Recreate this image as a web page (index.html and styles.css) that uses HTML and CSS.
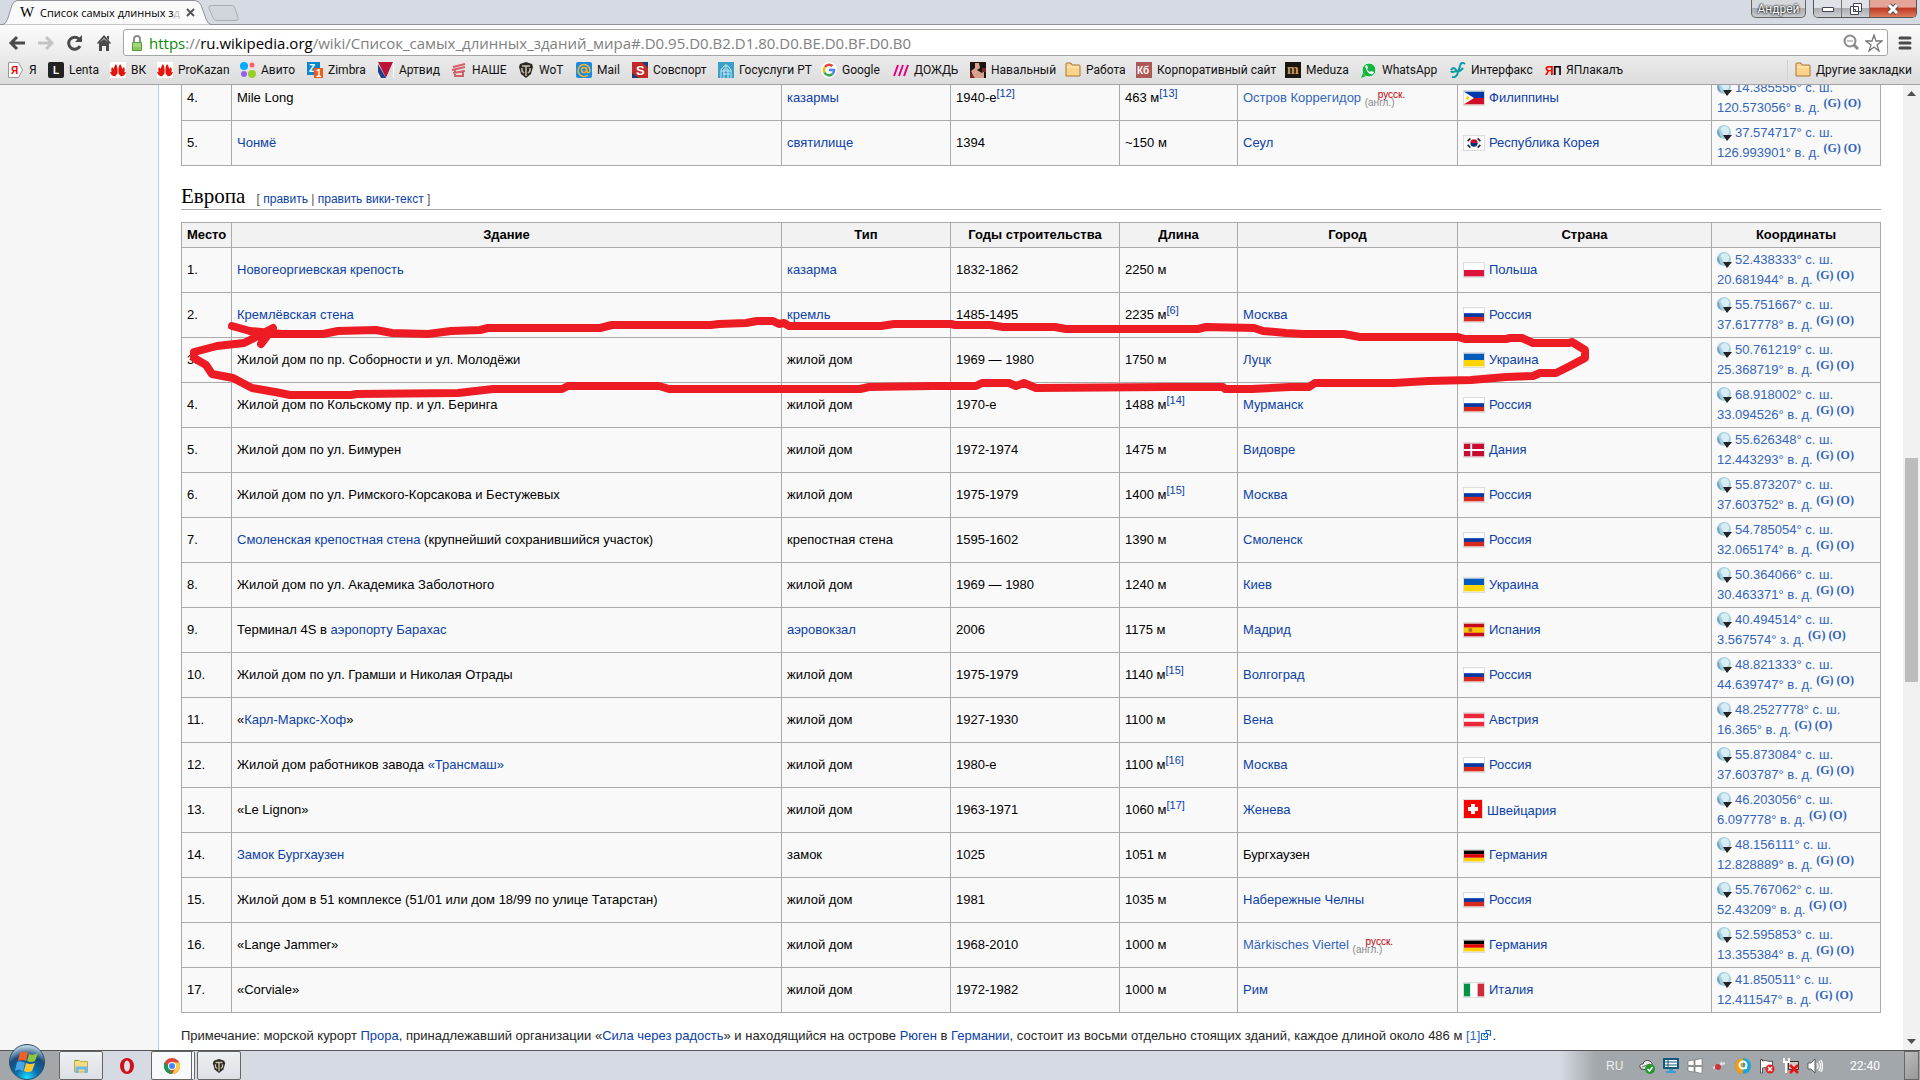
FILE: index.html
```html
<!DOCTYPE html>
<html lang="ru">
<head>
    <meta charset="UTF-8">
    <title>Список самых длинных зданий мира</title>
    <link rel="stylesheet" href="styles.css">
</head>
<body>

    <!-- флаги и значки -->
    <svg class="sprite" aria-hidden="true">
        <symbol id="ph" viewBox="0 0 22 14"><path fill="#0038a8" d="M0 0h22v7H0z"/><path fill="#ce1126" d="M0 7h22v7H0z"/><path fill="#fff" d="M0 0l11 7-11 7z"/><circle cx="4" cy="7" r="2" fill="#fcd116"/></symbol>
        <symbol id="kr" viewBox="0 0 22 14"><path fill="#fff" d="M0 0h22v14H0z"/><path fill="#c60c30" d="M7 7a4 4 0 0 1 8 0z"/><path fill="#003478" d="M7 7a4 4 0 0 0 8 0z"/><path stroke="#333" stroke-width="2" d="M4 5l3-3M15 2l3 3M4 9l3 3M15 12l3-3"/></symbol>
        <symbol id="pl" viewBox="0 0 22 14"><path fill="#fff" d="M0 0h22v7H0z"/><path fill="#dc143c" d="M0 7h22v7H0z"/></symbol>
        <symbol id="ru" viewBox="0 0 22 14"><path fill="#fff" d="M0 0h22v5H0z"/><path fill="#0039a6" d="M0 5h22v5H0z"/><path fill="#d52b1e" d="M0 9h22v5H0z"/></symbol>
        <symbol id="ua" viewBox="0 0 22 14"><path fill="#005bbb" d="M0 0h22v7H0z"/><path fill="#ffd500" d="M0 7h22v7H0z"/></symbol>
        <symbol id="dk" viewBox="0 0 22 14"><path fill="#c60c30" d="M0 0h22v14H0z"/><path fill="#fff" d="M7 0h2v14H7zM0 6h22v2H0z"/></symbol>
        <symbol id="es" viewBox="0 0 22 14"><path fill="#c60b1e" d="M0 0h22v14H0z"/><path fill="#ffc400" d="M0 4h22v6H0z"/><path fill="#ad6b24" d="M5 5h4v4H5z"/></symbol>
        <symbol id="at" viewBox="0 0 22 14"><path fill="#ed2939" d="M0 0h22v14H0z"/><path fill="#fff" d="M0 5h22v4H0z"/></symbol>
        <symbol id="ch" viewBox="0 0 18 18"><path fill="#f00" d="M0 0h18v18H0z"/><path fill="#fff" d="M7 4h4v3h3v4h-3v3H7v-3H4V7h3z"/></symbol>
        <symbol id="de" viewBox="0 0 22 12"><path d="M0 0h22v4H0z"/><path fill="#d00" d="M0 4h22v4H0z"/><path fill="#ffce00" d="M0 8h22v4H0z"/></symbol>
        <symbol id="it" viewBox="0 0 22 14"><path fill="#009246" d="M0 0h7v14H0z"/><path fill="#fff" d="M7 0h8v14H7z"/><path fill="#ce2b37" d="M15 0h7v14h-7z"/></symbol>
        <symbol id="globe" viewBox="0 0 15 16"><circle cx="7" cy="7" r="7" fill="#a9cfe0"/><path fill="#d6edf4" d="M5 2c4-2 8 1 7 5s-5 5-6 2-4-4-1-7z"/><path fill="#6fa3c4" d="M1 4c2 3 1 6 4 9-4-1-6-5-4-9z"/><path fill="#222" d="M6 10h9l-5 6z"/></symbol>
        <symbol id="flame" viewBox="0 0 16 16"><path fill="#fff" d="M0 0h16v16H0z"/><path fill="#e3150d" d="M7 13C3 11 3 5 6 2c2 3 2 8 1 11zM9 13c4-2 4-8 1-11-2 3-2 8-1 11zM6 13C2 12 0 9 2 5c2 2 4 4 4 8zM10 13c4-1 6-4 4-8-2 2-4 4-4 8zM6 14c-3 1-5-1-6-4 3 0 5 1 6 4zM10 14c3 1 5-1 6-4-3 0-5 1-6 4z"/></symbol>
        <symbol id="folder" viewBox="0 0 16 16"><path fill="#fbd38b" stroke="#a87434" d="M1 14V2q0-1 1-1h4l1 2h7q1 0 1 1v10z"/><path stroke="#fff0c8" d="M2 5h12"/></symbol>
        <symbol id="tank" viewBox="0 0 16 16"><path fill="#2c2a25" d="M2 2l6-2 6 2 1 3-2 7-5 4-5-4-2-7z"/><path fill="none" stroke="#c9c1a8" stroke-width="1.500" d="M4 4h8M8 4v10M4 6v3l2 2M12 6v3l-2 2"/></symbol>
    </svg>

    <header class="browser">
        <div class="tabstrip">
            <svg class="tab-shape" width="240" height="25" viewBox="0 0 240 25" aria-hidden="true">
                <path fill="#fafafa" stroke="#8f9398" d="M-1 24.500H3Q6 24 8 18L12 5Q14 1 17 .5H195Q199 1 201 5L206 19Q208 24 211 24.500"/>
                <path fill="#d0d6dc" stroke="#a9aeb4" d="M211 5.500h21q2 0 3 3l3 9q1 3-2 3h-19q-3 0-4-3l-4-9q-1-3 2-3z"/>
            </svg>
            <div class="tab">
                <span class="wiki">W</span>
                <span class="tab-title">Список самых длинных з<i>д</i></span>
                <button class="tab-close" aria-label="Закрыть вкладку"><svg width="9" height="9" viewBox="0 0 9 9"><path stroke="#555" stroke-width="2" d="M1 1l7 7M8 1L1 8"/></svg></button>
            </div>
            <div class="window-buttons">
                <button class="user">Андрей</button>
                <div class="win-group">
                    <button class="win" aria-label="Свернуть"><svg width="14" height="8" viewBox="0 0 14 8"><path fill="#fff" stroke="#445" d="M1.500 2.500h11v4h-11z"/></svg></button>
                    <button class="win" aria-label="Окно"><svg width="12" height="12" viewBox="0 0 12 12"><path fill="#fff" stroke="#445" d="M3.500.5h8v8h-8zM.5 3.500h8v8h-8zM3.500 6.500h2v2h-2z"/></svg></button>
                    <button class="win close" aria-label="Закрыть"><svg width="14" height="12" viewBox="0 0 14 12"><path stroke="#555" stroke-width="5" d="M3 2l8 8M11 2l-8 8"/><path stroke="#fff" stroke-width="3" d="M3 2l8 8M11 2l-8 8"/></svg></button>
                </div>
            </div>
        </div>

        <div class="toolbar">
            <button class="nav" aria-label="Назад"><svg width="18" height="16" viewBox="0 0 18 16"><path fill="none" stroke="#4a4a4a" stroke-width="3" d="M17 8H3M9 2L3 8l6 6"/></svg></button>
            <button class="nav" aria-label="Вперёд"><svg width="18" height="16" viewBox="0 0 18 16"><path fill="none" stroke="#c4c4c4" stroke-width="3" d="M1 8h14M9 2l6 6-6 6"/></svg></button>
            <button class="nav" aria-label="Обновить"><svg width="16" height="16" viewBox="0 0 16 16"><path fill="none" stroke="#4a4a4a" stroke-width="3" d="M13 11a6 6 0 1 1-1-7"/><path fill="#4a4a4a" d="M15 0v7H8z"/></svg></button>
            <button class="nav" aria-label="Домой"><svg width="16" height="16" viewBox="0 0 16 16"><path fill="#4a4a4a" d="M8 0l7 8-1 1-6-6-6 6-1-1zM3 8l5-4 5 4v8h-3v-5H6v5H3zM11 1h2v4l-2-2z"/></svg></button>
            <div class="omnibox">
                <svg width="12" height="16" viewBox="0 0 12 16"><path fill="none" stroke="#8a8f8a" stroke-width="2" d="M3 8V4a3 3 0 0 1 6 0v4"/><path fill="#8cc860" stroke="#5b9a3c" d="M1.500 7.500h9v8h-9z"/><path stroke="#b9e39a" d="M2 9h8M2 11h8"/></svg>
                <div class="url"><b>https</b>://<strong>ru.wikipedia.org</strong>/wiki/Список_самых_длинных_зданий_мира#.D0.95.D0.B2.D1.80.D0.BE.D0.BF.D0.B0</div>
                <svg width="16" height="17" viewBox="0 0 16 17"><circle cx="7" cy="7" r="5.500" fill="none" stroke="#888" stroke-width="2"/><path stroke="#888" stroke-width="3" d="M11 11l4 4"/><path stroke="#888" d="M4 7h6"/></svg>
                <svg width="18" height="18" viewBox="0 0 18 18"><path fill="#fff" stroke="#777" stroke-width="1.300" d="M9 1l2 6h6l-5 4 2 6-5-4-5 4 2-6-5-4h6z"/></svg>
            </div>
            <button class="menu" aria-label="Меню"><svg width="14" height="14" viewBox="0 0 14 14"><path stroke="#4a4a4a" stroke-width="3" stroke-linecap="round" d="M2 2h10M2 7h10M2 12h10"/></svg></button>
        </div>

        <nav class="bookmarks">
            <a href="#"><svg viewBox="0 0 16 16"><path fill="#fff" stroke="#999" d="M.5.500h10l4 7.500-4 7.500H.5z"/><text x="3" y="12" class="i-red">Я</text></svg>Я</a>
            <a href="#"><svg viewBox="0 0 16 16"><rect width="16" height="16" rx="2" fill="#222"/><text x="5" y="12" class="i-white">L</text></svg>Lenta</a>
            <a href="#"><svg viewBox="0 0 16 16"><use href="#flame"/></svg>ВК</a>
            <a href="#"><svg viewBox="0 0 16 16"><use href="#flame"/></svg>ProKazan</a>
            <a href="#"><svg viewBox="0 0 16 16"><circle cx="4" cy="4" r="4" fill="#0af"/><circle cx="12" cy="3" r="2.500" fill="#ff6163"/><circle cx="4" cy="12" r="3" fill="#965eeb"/><circle cx="12" cy="12" r="4" fill="#97cf26"/></svg>Авито</a>
            <a href="#"><svg viewBox="0 0 16 16"><path fill="#0d87c9" d="M0 0h13v13H0z"/><text x="2" y="10" class="i-white">Z</text><path fill="#f05a1a" d="M7 6h9v10H7z"/><text x="9" y="15" class="i-white">1</text></svg>Zimbra</a>
            <a href="#"><svg viewBox="0 0 16 16"><path fill="#fff" d="M0 0h16v16H0z"/><path fill="#bd1338" d="M0 0h15L8 16z"/><path fill="#1d3d8f" d="M0 2l8 14H3L0 10z"/><path fill="#ddd" d="M15 2v14H8z"/></svg>Артвид</a>
            <a href="#"><svg viewBox="0 0 16 16"><path fill="none" stroke="#d2616b" stroke-width="2" d="M2 5l12-3M1 8l13-3M2 11l12-2M4 8v6h8V8M5 14h6"/></svg>НАШЕ</a>
            <a href="#"><svg viewBox="0 0 16 16"><use href="#tank"/></svg>WoT</a>
            <a href="#"><svg viewBox="0 0 16 16"><rect width="16" height="16" rx="2" fill="#168de2"/><circle cx="8" cy="8" r="2.500" fill="none" stroke="#f9b12b" stroke-width="1.500"/><path fill="none" stroke="#f9b12b" stroke-width="1.500" d="M12 13a6 6 0 1 1 2-5q0 3-2 2.500-1.500 0-1.500-5"/></svg>Mail</a>
            <a href="#"><svg viewBox="0 0 16 16"><path fill="#c22a2a" d="M0 0h16v16H0z"/><path fill="#1f3b75" d="M10 0h6v6zM0 16v-5l7 5z"/><text x="4" y="13" class="i-white i-big">S</text></svg>Совспорт</a>
            <a href="#"><svg viewBox="0 0 16 16"><path fill="#3b9fc6" d="M0 0h16v16H0z"/><path fill="none" stroke="#c6eaf5" d="M3 16V8l3-4h4l3 4v8M6 16V7h4v9M8 2v4M3 9h10M5 12h7"/></svg>Госуслуги РТ</a>
            <a href="#"><svg viewBox="0 0 16 16"><circle cx="8" cy="8" r="8" fill="#fff"/><g fill="none" stroke-width="2.500"><path stroke="#ea4335" d="M4 5a5 5 0 0 1 7.500-1"/><path stroke="#fbbc05" d="M3.500 10.500a5 5 0 0 1 .5-5.500"/><path stroke="#34a853" d="M3.500 10.500a5 5 0 0 0 8 1.500"/><path stroke="#4285f4" d="M11.500 12Q13 11 13 8H8"/></g></svg>Google</a>
            <a href="#"><svg viewBox="0 0 16 16"><path stroke="#e6007e" stroke-width="2" d="M1 14L5 3M6 14l4-11M11 14l4-11"/></svg>ДОЖДЬ</a>
            <a href="#"><svg viewBox="0 0 16 16"><path fill="#1c1514" d="M0 0h16v16H0z"/><path fill="#d9a08c" d="M5 1h4l1 5-3 2 5 3 2-2v7H4L1 9l4-3z"/><path fill="#7c2722" d="M0 10l5 6H0zM12 6h4v4h-4z"/></svg>Навальный</a>
            <a href="#"><svg viewBox="0 0 16 16"><use href="#folder"/></svg>Работа</a>
            <a href="#"><svg viewBox="0 0 16 16"><path fill="#ad5757" d="M0 0h16v16H0z"/><text x="1" y="12" class="i-white">Кб</text></svg>Корпоративный сайт</a>
            <a href="#"><svg viewBox="0 0 16 16"><path fill="#1b1612" d="M0 0h16v16H0z"/><text x="2" y="12" class="i-gold">m</text></svg>Meduza</a>
            <a href="#"><svg viewBox="0 0 16 16"><circle cx="8" cy="8" r="7" fill="#14b53c" stroke="#fff"/><path fill="#14b53c" d="M0 16l2-5 3 3z"/><path fill="#fff" d="M4 4l2-1 1 3-1 1q1 2 3 3l1-1 3 1-1 2Q7 14 4 4z"/></svg>WhatsApp</a>
            <a href="#"><svg viewBox="0 0 16 16"><path fill="none" stroke="#109aa4" stroke-width="2" d="M15 2q-4-3-5 2L7 13q-2 3-5 2M1 8q3-4 5 0t7-2M6 9q-4 2-5 0"/></svg>Интерфакс</a>
            <a href="#"><svg viewBox="0 0 16 16"><text x="0" y="13" class="i-red i-heavy">Я</text><text x="8" y="13" class="i-black i-heavy">П</text></svg>ЯПлакалъ</a>
            <a href="#" class="other"><svg viewBox="0 0 16 16"><use href="#folder"/></svg>Другие закладки</a>
        </nav>
    </header>

    <div class="viewport">
        <main class="content">
            <table class="wikitable asia">
                <colgroup><col class="c-num"><col><col class="c-type"><col class="c-years"><col class="c-len"><col class="c-city"><col class="c-land"><col class="c-geo"></colgroup>
                <tr><td>4.</td><td>Mile Long</td><td><a href="#">казармы</a></td><td>1940-е<sup><a href="#">[12]</a></sup></td><td>463 м<sup><a href="#">[13]</a></sup></td><td><a href="#" class="ext">Остров Коррегидор</a> <span class="lang"><a href="#">русск.</a><span>(англ.)</span></span></td><td><svg class="flag"><use href="#ph"/></svg><a href="#">Филиппины</a></td><td class="geo"><svg><use href="#globe"/></svg><a href="#">14.385556° с. ш.<br>120.573056° в. д.</a> <sup><a href="#">(G)</a> <a href="#">(O)</a></sup></td></tr>
                <tr><td>5.</td><td><a href="#">Чонмё</a></td><td><a href="#">святилище</a></td><td>1394</td><td>~150 м</td><td><a href="#">Сеул</a></td><td><svg class="flag"><use href="#kr"/></svg><a href="#">Республика Корея</a></td><td class="geo"><svg><use href="#globe"/></svg><a href="#">37.574717° с. ш.<br>126.993901° в. д.</a> <sup><a href="#">(G)</a> <a href="#">(O)</a></sup></td></tr>
            </table>

            <h3>Европа <span class="edit">[ <a href="#">править</a> | <a href="#">править вики-текст</a> ]</span></h3>

            <table class="wikitable">
                <colgroup><col class="c-num"><col><col class="c-type"><col class="c-years"><col class="c-len"><col class="c-city"><col class="c-land"><col class="c-geo"></colgroup>
                <tr><th>Место</th><th>Здание</th><th>Тип</th><th>Годы строительства</th><th>Длина</th><th>Город</th><th>Страна</th><th>Координаты</th></tr>
                <tr><td>1.</td><td><a href="#">Новогеоргиевская крепость</a></td><td><a href="#">казарма</a></td><td>1832-1862</td><td>2250 м</td><td></td><td><svg class="flag"><use href="#pl"/></svg><a href="#">Польша</a></td><td class="geo"><svg><use href="#globe"/></svg><a href="#">52.438333° с. ш.<br>20.681944° в. д.</a> <sup><a href="#">(G)</a> <a href="#">(O)</a></sup></td></tr>
                <tr><td>2.</td><td><a href="#">Кремлёвская стена</a></td><td><a href="#">кремль</a></td><td>1485-1495</td><td>2235 м<sup><a href="#">[6]</a></sup></td><td><a href="#">Москва</a></td><td><svg class="flag"><use href="#ru"/></svg><a href="#">Россия</a></td><td class="geo"><svg><use href="#globe"/></svg><a href="#">55.751667° с. ш.<br>37.617778° в. д.</a> <sup><a href="#">(G)</a> <a href="#">(O)</a></sup></td></tr>
                <tr><td>3.</td><td>Жилой дом по пр. Соборности и ул. Молодёжи</td><td>жилой дом</td><td>1969 — 1980</td><td>1750 м</td><td><a href="#">Луцк</a></td><td><svg class="flag"><use href="#ua"/></svg><a href="#">Украина</a></td><td class="geo"><svg><use href="#globe"/></svg><a href="#">50.761219° с. ш.<br>25.368719° в. д.</a> <sup><a href="#">(G)</a> <a href="#">(O)</a></sup></td></tr>
                <tr><td>4.</td><td>Жилой дом по Кольскому пр. и ул. Беринга</td><td>жилой дом</td><td>1970-е</td><td>1488 м<sup><a href="#">[14]</a></sup></td><td><a href="#">Мурманск</a></td><td><svg class="flag"><use href="#ru"/></svg><a href="#">Россия</a></td><td class="geo"><svg><use href="#globe"/></svg><a href="#">68.918002° с. ш.<br>33.094526° в. д.</a> <sup><a href="#">(G)</a> <a href="#">(O)</a></sup></td></tr>
                <tr><td>5.</td><td>Жилой дом по ул. Бимурен</td><td>жилой дом</td><td>1972-1974</td><td>1475 м</td><td><a href="#">Видовре</a></td><td><svg class="flag"><use href="#dk"/></svg><a href="#">Дания</a></td><td class="geo"><svg><use href="#globe"/></svg><a href="#">55.626348° с. ш.<br>12.443293° в. д.</a> <sup><a href="#">(G)</a> <a href="#">(O)</a></sup></td></tr>
                <tr><td>6.</td><td>Жилой дом по ул. Римского-Корсакова и Бестужевых</td><td>жилой дом</td><td>1975-1979</td><td>1400 м<sup><a href="#">[15]</a></sup></td><td><a href="#">Москва</a></td><td><svg class="flag"><use href="#ru"/></svg><a href="#">Россия</a></td><td class="geo"><svg><use href="#globe"/></svg><a href="#">55.873207° с. ш.<br>37.603752° в. д.</a> <sup><a href="#">(G)</a> <a href="#">(O)</a></sup></td></tr>
                <tr><td>7.</td><td><a href="#">Смоленская крепостная стена</a> (крупнейший сохранившийся участок)</td><td>крепостная стена</td><td>1595-1602</td><td>1390 м</td><td><a href="#">Смоленск</a></td><td><svg class="flag"><use href="#ru"/></svg><a href="#">Россия</a></td><td class="geo"><svg><use href="#globe"/></svg><a href="#">54.785054° с. ш.<br>32.065174° в. д.</a> <sup><a href="#">(G)</a> <a href="#">(O)</a></sup></td></tr>
                <tr><td>8.</td><td>Жилой дом по ул. Академика Заболотного</td><td>жилой дом</td><td>1969 — 1980</td><td>1240 м</td><td><a href="#">Киев</a></td><td><svg class="flag"><use href="#ua"/></svg><a href="#">Украина</a></td><td class="geo"><svg><use href="#globe"/></svg><a href="#">50.364066° с. ш.<br>30.463371° в. д.</a> <sup><a href="#">(G)</a> <a href="#">(O)</a></sup></td></tr>
                <tr><td>9.</td><td>Терминал 4S в <a href="#">аэропорту Барахас</a></td><td><a href="#">аэровокзал</a></td><td>2006</td><td>1175 м</td><td><a href="#">Мадрид</a></td><td><svg class="flag"><use href="#es"/></svg><a href="#">Испания</a></td><td class="geo"><svg><use href="#globe"/></svg><a href="#">40.494514° с. ш.<br>3.567574° з. д.</a> <sup><a href="#">(G)</a> <a href="#">(O)</a></sup></td></tr>
                <tr><td>10.</td><td>Жилой дом по ул. Грамши и Николая Отрады</td><td>жилой дом</td><td>1975-1979</td><td>1140 м<sup><a href="#">[15]</a></sup></td><td><a href="#">Волгоград</a></td><td><svg class="flag"><use href="#ru"/></svg><a href="#">Россия</a></td><td class="geo"><svg><use href="#globe"/></svg><a href="#">48.821333° с. ш.<br>44.639747° в. д.</a> <sup><a href="#">(G)</a> <a href="#">(O)</a></sup></td></tr>
                <tr><td>11.</td><td>«<a href="#">Карл-Маркс-Хоф</a>»</td><td>жилой дом</td><td>1927-1930</td><td>1100 м</td><td><a href="#">Вена</a></td><td><svg class="flag"><use href="#at"/></svg><a href="#">Австрия</a></td><td class="geo"><svg><use href="#globe"/></svg><a href="#">48.2527778° с. ш.<br>16.365° в. д.</a> <sup><a href="#">(G)</a> <a href="#">(O)</a></sup></td></tr>
                <tr><td>12.</td><td>Жилой дом работников завода <a href="#">«Трансмаш»</a></td><td>жилой дом</td><td>1980-е</td><td>1100 м<sup><a href="#">[16]</a></sup></td><td><a href="#">Москва</a></td><td><svg class="flag"><use href="#ru"/></svg><a href="#">Россия</a></td><td class="geo"><svg><use href="#globe"/></svg><a href="#">55.873084° с. ш.<br>37.603787° в. д.</a> <sup><a href="#">(G)</a> <a href="#">(O)</a></sup></td></tr>
                <tr><td>13.</td><td>«Le Lignon»</td><td>жилой дом</td><td>1963-1971</td><td>1060 м<sup><a href="#">[17]</a></sup></td><td><a href="#">Женева</a></td><td><svg class="flag square"><use href="#ch"/></svg><a href="#">Швейцария</a></td><td class="geo"><svg><use href="#globe"/></svg><a href="#">46.203056° с. ш.<br>6.097778° в. д.</a> <sup><a href="#">(G)</a> <a href="#">(O)</a></sup></td></tr>
                <tr><td>14.</td><td><a href="#">Замок Бургхаузен</a></td><td>замок</td><td>1025</td><td>1051 м</td><td>Бургхаузен</td><td><svg class="flag low"><use href="#de"/></svg><a href="#">Германия</a></td><td class="geo"><svg><use href="#globe"/></svg><a href="#">48.156111° с. ш.<br>12.828889° в. д.</a> <sup><a href="#">(G)</a> <a href="#">(O)</a></sup></td></tr>
                <tr><td>15.</td><td>Жилой дом в 51 комплексе (51/01 или дом 18/99 по улице Татарстан)</td><td>жилой дом</td><td>1981</td><td>1035 м</td><td><a href="#">Набережные Челны</a></td><td><svg class="flag"><use href="#ru"/></svg><a href="#">Россия</a></td><td class="geo"><svg><use href="#globe"/></svg><a href="#">55.767062° с. ш.<br>52.43209° в. д.</a> <sup><a href="#">(G)</a> <a href="#">(O)</a></sup></td></tr>
                <tr><td>16.</td><td>«Lange Jammer»</td><td>жилой дом</td><td>1968-2010</td><td>1000 м</td><td><a href="#" class="ext">Märkisches Viertel</a> <span class="lang"><a href="#">русск.</a><span>(англ.)</span></span></td><td><svg class="flag low"><use href="#de"/></svg><a href="#">Германия</a></td><td class="geo"><svg><use href="#globe"/></svg><a href="#">52.595853° с. ш.<br>13.355384° в. д.</a> <sup><a href="#">(G)</a> <a href="#">(O)</a></sup></td></tr>
                <tr><td>17.</td><td>«Corviale»</td><td>жилой дом</td><td>1972-1982</td><td>1000 м</td><td><a href="#">Рим</a></td><td><svg class="flag"><use href="#it"/></svg><a href="#">Италия</a></td><td class="geo"><svg><use href="#globe"/></svg><a href="#">41.850511° с. ш.<br>12.411547° в. д.</a> <sup><a href="#">(G)</a> <a href="#">(O)</a></sup></td></tr>
            </table>

            <p class="note">Примечание: морской курорт <a href="#">Прора</a>, принадлежавший организации «<a href="#">Сила через радость</a>» и находящийся на острове <a href="#">Рюген</a> в <a href="#">Германии</a>, состоит из восьми отдельно стоящих зданий, каждое длиной около 486 м <a href="#" class="ext">[1]<svg width="12" height="10" viewBox="0 0 12 10"><path fill="#fff" stroke="#06c" d="M1.500 3.500h6v6h-6zM5.500.500h5v5l-2-1-3 3-2-2 3-3z"/></svg></a>.</p>
        </main>

        <div class="scrollbar">
            <svg width="9" height="5" viewBox="0 0 9 5"><path fill="#505050" d="M0 5l4.500-5L9 5z"/></svg>
            <div class="thumb"></div>
            <svg width="9" height="5" viewBox="0 0 9 5"><path fill="#505050" d="M0 0l4.500 5L9 0z"/></svg>
        </div>

        <!-- обводка от руки -->
        <svg class="marker" width="1410" height="90" viewBox="185 315 1410 90" aria-hidden="true">
            <path d="M232 326L250 331L282 334H323L338 331L376 330L392 333L428 334L451 331L480 330L488 328H600L612 325H711L719 324L746 323L757 321H773L779 324L784 323L789 326H881L894 324H951L955 325H990L1003 327H1055L1066 329H1198L1206 327L1254 328L1263 331L1286 333L1303 334H1344L1360 337H1458L1465 339H1506L1510 338H1522L1533 343H1569L1572 342L1585 350V358L1570 366L1556 373H1540L1533 376L1506 377L1471 380L1428 381L1394 383H1315L1309 387H1290L1252 389H1225L1223 387H1181L1166 387L1036 388L1024 383L1016 386L1009 383H982L976 386H932L869 387L860 389H669L659 386H568L562 389H493L458 393L357 394L351 395H290L275 392L252 388L233 378L212 374L206 365L194 358V352L217 346L244 343L256 337L273 328L261 344L266 335L250 331"/>
        </svg>
    </div>

    <footer class="taskbar">
        <button class="start" aria-label="Пуск">
            <svg width="36" height="36" viewBox="0 0 36 36">
                <defs><radialGradient id="orb" cx=".5" cy=".95" r=".9"><stop offset="0" stop-color="#1fe0ff"/><stop offset=".35" stop-color="#0a6fae"/><stop offset=".7" stop-color="#1a4a78"/><stop offset="1" stop-color="#b9d0e0"/></radialGradient></defs>
                <circle cx="18" cy="18" r="17.500" fill="url(#orb)" stroke="#27506e"/>
                <path fill="#f0602a" d="M11 9q4-3 8 0l-2 8q-4-2-8 0z"/><path fill="#8cc63e" d="M20 10q4 2 9-1l-3 8q-4 2-8 0z"/><path fill="#4aa5e8" d="M8 18q4-2 8 1l-2 8q-4-3-8 0z"/><path fill="#fdc82f" d="M17 19q4 2 9 0l-3 8q-4 2-8 0z"/>
            </svg>
        </button>
        <button class="task" aria-label="Проводник"><svg width="18" height="16" viewBox="0 0 18 16"><path fill="#f3dc84" stroke="#c7a94d" d="M2.500 14V2.500h5l1 1h7V14z"/><path fill="#6a3" d="M3 2h3v1H3z"/><path fill="none" stroke="#6db8e6" stroke-width="3" d="M5 15v-5h9v5"/></svg></button>
        <button class="task flat" aria-label="Opera"><svg width="14" height="16" viewBox="0 0 14 16"><ellipse cx="7" cy="8" rx="7" ry="8" fill="#cf1018"/><ellipse cx="7" cy="8" rx="3" ry="5.500" fill="#dde1e8"/></svg></button>
        <button class="task active" aria-label="Chrome"><svg width="16" height="16" viewBox="0 0 16 16"><circle cx="8" cy="8" r="8" fill="#db4437"/><path fill="#0f9d58" d="M1 4l5 8 2 4A8 8 0 0 1 1 4z"/><path fill="#ffcd40" d="M8 4.500h7.200A8 8 0 0 1 8 16l3.500-6z"/><circle cx="8" cy="8" r="4" fill="#fff"/><circle cx="8" cy="8" r="3" fill="#4285f4"/></svg></button>
        <button class="task" aria-label="World of Tanks"><svg width="14" height="16" viewBox="0 0 16 16"><use href="#tank"/></svg></button>
        <div class="tray">
            <span class="lang-ind">RU</span>
            <div class="tray-icons">
                <svg viewBox="0 0 16 16"><path fill="#e8e8e8" stroke="#444" d="M1 9q-1-3 3-3 1-5 7-3 3 2 2 5l-3 4-8-1z"/><path stroke="#666" d="M3 9l8-3"/><circle cx="11" cy="11" r="5" fill="#219a2a"/><path fill="none" stroke="#fff" stroke-width="1.500" d="M8.500 11l2 2 3-4"/></svg>
                <svg viewBox="0 0 16 16"><path fill="#fff" stroke="#14597c" stroke-width="2" d="M1 1h14v9H1z"/><path stroke="#14597c" d="M5 2v8M2 4h12M2 7h12"/><path fill="#3a9fd0" d="M6 11h4v2h3v2H3v-2h3z"/></svg>
                <svg viewBox="0 0 16 16"><path fill="#fff" stroke="#666" stroke-width=".6" d="M1 3l6-1v5.500H1zM8 2l7-1.500v7H8zM1 8.500h6V14l-6-1zM8 8.500h7v7L8 14z"/></svg>
                <svg viewBox="0 0 16 16"><path stroke="#ddd" stroke-width="2" d="M2 10l12-5M5 12l6-8"/><circle cx="7" cy="9" r="3" fill="#c33"/></svg>
                <svg viewBox="0 0 16 16"><circle cx="8" cy="8" r="8" fill="#1ca6d8"/><path fill="#f59b13" d="M8 0a8 8 0 0 0 0 16z"/><circle cx="8" cy="7" r="3.500" fill="none" stroke="#fff" stroke-width="2"/><path stroke="#fff" stroke-width="2" d="M11 7v4"/></svg>
                <svg viewBox="0 0 16 16"><path fill="#fff" stroke="#555" d="M1.500 15V1.500h2V3q3-1 5 0t5 0v7q-3 1-5 0t-5 0v5z"/><circle cx="11" cy="11" r="4.500" fill="#d22"/><path stroke="#fff" stroke-width="1.500" d="M9 9l4 4M13 9l-4 4"/></svg>
                <svg viewBox="0 0 16 16"><path fill="#ccc" stroke="#333" d="M5.500 3.500h10v8h-10z"/><path fill="none" stroke="#fff" stroke-width="2" d="M1 0v4h5V0M3 4v11"/><path stroke="#e11" stroke-width="2.500" d="M7 7l8 8M15 7l-8 8"/></svg>
                <svg viewBox="0 0 16 16"><path fill="#fff" stroke="#444" stroke-width=".8" d="M1 5h3l4-4v14l-4-4H1z"/><path fill="none" stroke="#fff" stroke-width="1.300" d="M10 5q2 3 0 6M12 3q3 5 0 10M14 2q3 6 0 12"/></svg>
            </div>
            <time>22:40</time>
            <button class="desktop" aria-label="Свернуть все окна"></button>
        </div>
    </footer>

</body>
</html>
```

FILE: styles.css
```css
* {
    box-sizing: border-box;
}

body {
    margin: 0;
    height: 100vh;
    display: flex;
    flex-direction: column;
    overflow: hidden;
    font-family: "Liberation Sans", Arial, sans-serif;
    font-size: 13px;
    color: #000;
    background: #fff;
}

a {
    color: #0b41a8;
    text-decoration: none;
}

button {
    border: none;
    background: none;
    padding: 0;
    display: flex;
    align-items: center;
    justify-content: center;
}

.sprite {
    display: none;
}

/* окно браузера */
.browser {
    flex: none;
    height: 85px;
    font-family: Roboto, "Open Sans", sans-serif;
    border-bottom: 1px solid #a3a3a3;
    background: linear-gradient(#fbfbfb 25px, #dddddd);
}

.tabstrip {
    position: relative;
    display: flex;
    justify-content: space-between;
    height: 25px;
    background: #d6dae2;
    border-bottom: 1px solid #8f9398;
}

.tab-shape {
    position: absolute;
    left: 0;
    top: 0;
}

.tab {
    position: relative;
    display: flex;
    align-items: center;
    width: 210px;
    padding-left: 20px;
}

.wiki {
    width: 20px;
    font-family: "Liberation Serif", serif;
    font-size: 15px;
}

.tab-title {
    width: 144px;
    font: 11px "Open Sans", sans-serif;
    white-space: nowrap;
}

.tab-title i {
    font-style: normal;
    color: #bbb;
}

.tab-close {
    margin-left: 2px;
}

.window-buttons {
    display: flex;
    gap: 7px;
    padding-right: 3px;
}

.user {
    width: 55px;
    height: 18px;
    border: 1px solid #666;
    border-top: none;
    border-radius: 0 0 5px 5px;
    background: linear-gradient(#d5d8dc 50%, #a9acb0 50%, #c8cace);
    color: #fff;
    font: 12px Roboto, sans-serif;
    text-shadow: 0 0 2px #000, 0 0 2px #000;
}

.win-group {
    display: flex;
    height: 18px;
    border: 1px solid #555;
    border-top: none;
    border-radius: 0 0 5px 5px;
    overflow: hidden;
}

.win {
    width: 28px;
    border-right: 1px solid #777;
    background: linear-gradient(#dfe2e6 50%, #a9acb0 50%, #cdd0d4);
}

.win.close {
    width: 46px;
    border: none;
    background: linear-gradient(#e5a498 40%, #c03a24 50%, #dd7b5c);
}

.toolbar {
    display: flex;
    align-items: center;
    height: 35px;
    padding: 0 8px 0 2px;
}

.nav {
    width: 29px;
    height: 24px;
}

.nav + .omnibox {
    margin-left: 5px;
}

.omnibox {
    flex: 1;
    display: flex;
    align-items: center;
    gap: 6px;
    height: 27px;
    padding: 0 4px 0 7px;
    border: 1px solid #a5a5a5;
    border-radius: 3px;
    background: #fff;
}

.url {
    flex: 1;
    font: 15px "Open Sans", sans-serif;
    color: #808080;
    white-space: nowrap;
}

.url b {
    font-weight: normal;
    color: #0a8a0a;
}

.url strong {
    font-weight: normal;
    color: #000;
}

.menu {
    width: 24px;
    justify-content: flex-end;
}

.bookmarks {
    display: grid;
    grid-template-columns: 40px 62px 47px 83px 67px 71px 73px 67px 58px 56px 86px 103px 72px 77px 95px 71px 149px 76px 89px 95px 100px 1fr;
    height: 20px;
    padding: 0 8px;
}

.bookmarks a {
    display: flex;
    align-items: center;
    gap: 5px;
    font-size: 12px;
    color: #111;
    white-space: nowrap;
}

.bookmarks svg {
    width: 16px;
    height: 16px;
    flex: none;
}

.bookmarks text {
    font: bold 10px "Liberation Sans", sans-serif;
}

.bookmarks .i-red { fill: #e00; }
.bookmarks .i-white { fill: #fff; }
.bookmarks .i-black { fill: #000; }
.bookmarks .i-gold {
    fill: #c99a5b;
    font: bold 14px "Liberation Serif", serif;
}
.bookmarks .i-big { font-size: 13px; }
.bookmarks .i-heavy { font-size: 12px; }

.bookmarks .other {
    justify-self: end;
    padding-left: 7px;
    border-left: 1px solid #ccd3dc;
}

/* страница */
.viewport {
    position: relative;
    flex: 1;
    min-height: 0;
    display: flex;
    overflow: hidden;
    background: #f6f6f6;
}

.content {
    flex: 1;
    margin-left: 158px;
    padding: 0 22px;
    border-left: 1px solid #a7d7f9;
    background: #fff;
}

.wikitable {
    width: 100%;
    table-layout: fixed;
    border-collapse: collapse;
    background: #f9f9f9;
}

.asia {
    margin-top: -10px;
}

.c-num { width: 50px; }
.c-type,
.c-years,
.c-geo { width: 169px; }
.c-len { width: 118px; }
.c-city { width: 220px; }
.c-land { width: 254px; }

.wikitable th,
.wikitable td {
    border: 1px solid #aaa;
    padding: 2px 5px;
    line-height: 20px;
}

.wikitable th {
    background: #f2f2f2;
    white-space: nowrap;
}

.wikitable td {
    height: 45px;
    padding: 1px 5px;
}

.wikitable sup {
    font-size: 11px;
    line-height: 0;
}

.flag {
    width: 22px;
    height: 16px;
    margin-right: 4px;
    border: 1px solid #ddd;
    vertical-align: -4px;
}

.flag.square {
    width: 20px;
    height: 20px;
}

.flag.low {
    height: 14px;
}

.ext,
.geo a {
    color: #36b;
}

.geo {
    white-space: nowrap;
}

.geo svg {
    width: 15px;
    height: 16px;
    margin-right: 3px;
    vertical-align: -4px;
}

.wikitable .geo sup {
    font-family: "Liberation Serif", serif;
    font-size: 12px;
    font-weight: bold;
}

.lang {
    display: inline-flex;
    flex-direction: column;
    font-size: 10px;
    line-height: 8px;
    vertical-align: middle;
    color: #888;
}

.lang a {
    padding-left: 13px;
    color: #ba0000;
}

h3 {
    margin: 20px 0 12px;
    padding-bottom: 3px;
    border-bottom: 1px solid #aaa;
    font: 21px/20px "Liberation Serif", serif;
}

.edit {
    margin-left: 6px;
    font: 12px "Liberation Sans", Arial, sans-serif;
    color: #555;
}

.note {
    margin: 13px 0 0;
    line-height: 20px;
    white-space: nowrap;
    color: #252525;
}

.marker {
    position: absolute;
    left: 185px;
    top: 230px;
    fill: none;
    stroke: #ed1c24;
    stroke-width: 8;
    stroke-linecap: round;
    stroke-linejoin: round;
    pointer-events: none;
}

.scrollbar {
    display: flex;
    flex-direction: column;
    justify-content: space-between;
    align-items: center;
    width: 17px;
    padding: 6px 0;
    background: #f1f1f1;
}

.thumb {
    width: 13px;
    height: 224px;
    margin-top: 5px;
    background: #bcbcbc;
}

/* панель задач */
.taskbar {
    position: relative;
    flex: none;
    display: flex;
    height: 30px;
    border-top: 1px solid #555;
    background: #d6dae2;
}

.start {
    width: 59px;
    height: 29px;
    padding-right: 5px;
    align-items: flex-end;
    background: #a3a7aa;
}

.task {
    width: 44px;
    margin-right: 2px;
    border: 1px solid #666;
    border-radius: 2px;
    background: linear-gradient(#eef0f2, #dcdfe4);
}

.task.flat {
    border-color: transparent;
    background: none;
}

.task.active {
    background: #f8f9fa;
    border-right-width: 4px;
    border-right-style: double;
}

.tray {
    display: flex;
    align-items: center;
    margin-left: auto;
    width: 360px;
    padding: 0 1px 0 46px;
    background: linear-gradient(to right, #d6dae2, #a2a7ab 36px);
}

.lang-ind {
    width: 33px;
    font-size: 12px;
    color: #eee;
}

.tray-icons {
    display: flex;
    gap: 8px;
}

.tray-icons svg {
    width: 16px;
    height: 16px;
}

time {
    margin-left: auto;
    padding-right: 24px;
    color: #fff;
    font: 12px Roboto, sans-serif;
}

.desktop {
    width: 15px;
    height: 29px;
    border: 1px solid #666;
    background: linear-gradient(135deg, #bbb, #999);
}
```
